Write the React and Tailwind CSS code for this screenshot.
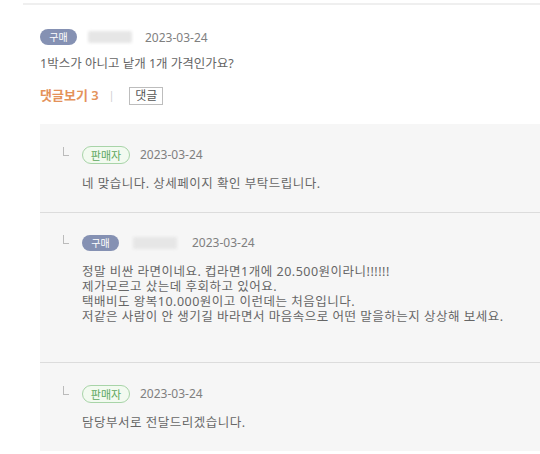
import React from 'react';

const FONT = { fontFamily: '"Noto Sans", "Noto Sans CJK KR", sans-serif' };

function BuyerBadge() {
  return (
    <span className="inline-flex h-4 w-[37px] items-center justify-center rounded-full bg-[#8591b3] text-[10px] leading-none text-white">
      구매
    </span>
  );
}

function SellerBadge() {
  return (
    <span className="inline-flex h-[18px] w-[48px] items-center justify-center rounded-full border border-[#a8d4a8] bg-[#f2faf0] text-[11px] leading-none text-[#5ea85e]">
      판매자
    </span>
  );
}

function HiddenName({ className }) {
  return <span className={`inline-block h-3 rounded-[2px] bg-[#e6e6e6] blur-[1.5px] ${className}`} />;
}

function Reply({ seller, lines, pad }) {
  return (
    <div className={`pl-[23px] ${pad}`}>
      <div className="flex items-center">
        <span className="mb-2 mr-[13px] h-[9px] w-[6px] border-b border-l border-[#bbb]" />
        {seller ? (
          <>
            <SellerBadge />
            <span className="ml-[10px] text-[12px] text-[#808080]">2023-03-24</span>
          </>
        ) : (
          <>
            <BuyerBadge />
            <HiddenName className="ml-[14px] w-[44px]" />
            <span className="ml-[15px] text-[12px] text-[#808080]">2023-03-24</span>
          </>
        )}
      </div>
      <div className="mt-[12px] pl-[19px] text-[12.5px] leading-[15px] tracking-[0.5px] text-[#666]">
        {lines.map((l, i) => (
          <p key={i}>{l}</p>
        ))}
      </div>
    </div>
  );
}

export default function App() {
  return (
    <div className="h-[454px] w-[540px] overflow-hidden bg-white" style={FONT}>
      <div className="ml-[23px] mt-[3px] h-[2px] bg-[#efefef]" />

      <div className="pl-10 pt-[21px]">
        <div className="flex items-center">
          <BuyerBadge />
          <HiddenName className="ml-[11px] w-[44px]" />
          <span className="ml-[13px] mt-[3px] text-[12px] text-[#808080]">2023-03-24</span>
        </div>
        <p className="mt-[8px] text-[12.5px] text-[#666]">1박스가 아니고 낱개 1개 가격인가요?</p>
        <div className="mt-[12px] flex items-center text-[12px]">
          <span className="text-[13px] font-semibold text-[#e4925a]">댓글보기 3</span>
          <span className="ml-[10px] text-[10px] text-[#ccc]">|</span>
          <span className="ml-[15px] flex h-[18px] items-center border border-[#bdbdbd] px-[5px] text-[12px] text-[#555]">댓글</span>
        </div>
      </div>

      <div className="ml-10 mt-[19px] bg-[#f6f6f6]">
        <Reply seller pad="pt-[22px] pb-[21px]" lines={['네 맞습니다. 상세페이지 확인 부탁드립니다.']} />
        <div className="h-px bg-[#dcdcdc]" />
        <Reply
          pad="pt-[21px] pb-[38px]"
          lines={[
            '정말 비싼 라면이네요. 컵라면1개에 20.500원이라니!!!!!!',
            '제가모르고 샀는데 후회하고 있어요.',
            '택배비도 왕복10.000원이고 이런데는 처음입니다.',
            '저같은 사람이 안 생기길 바라면서 마음속으로 어떤 말을하는지 상상해 보세요.',
          ]}
        />
        <div className="h-px bg-[#dcdcdc]" />
        <Reply seller pad="pt-[22px] pb-[21px]" lines={['담당부서로 전달드리겠습니다.']} />
      </div>
    </div>
  );
}
